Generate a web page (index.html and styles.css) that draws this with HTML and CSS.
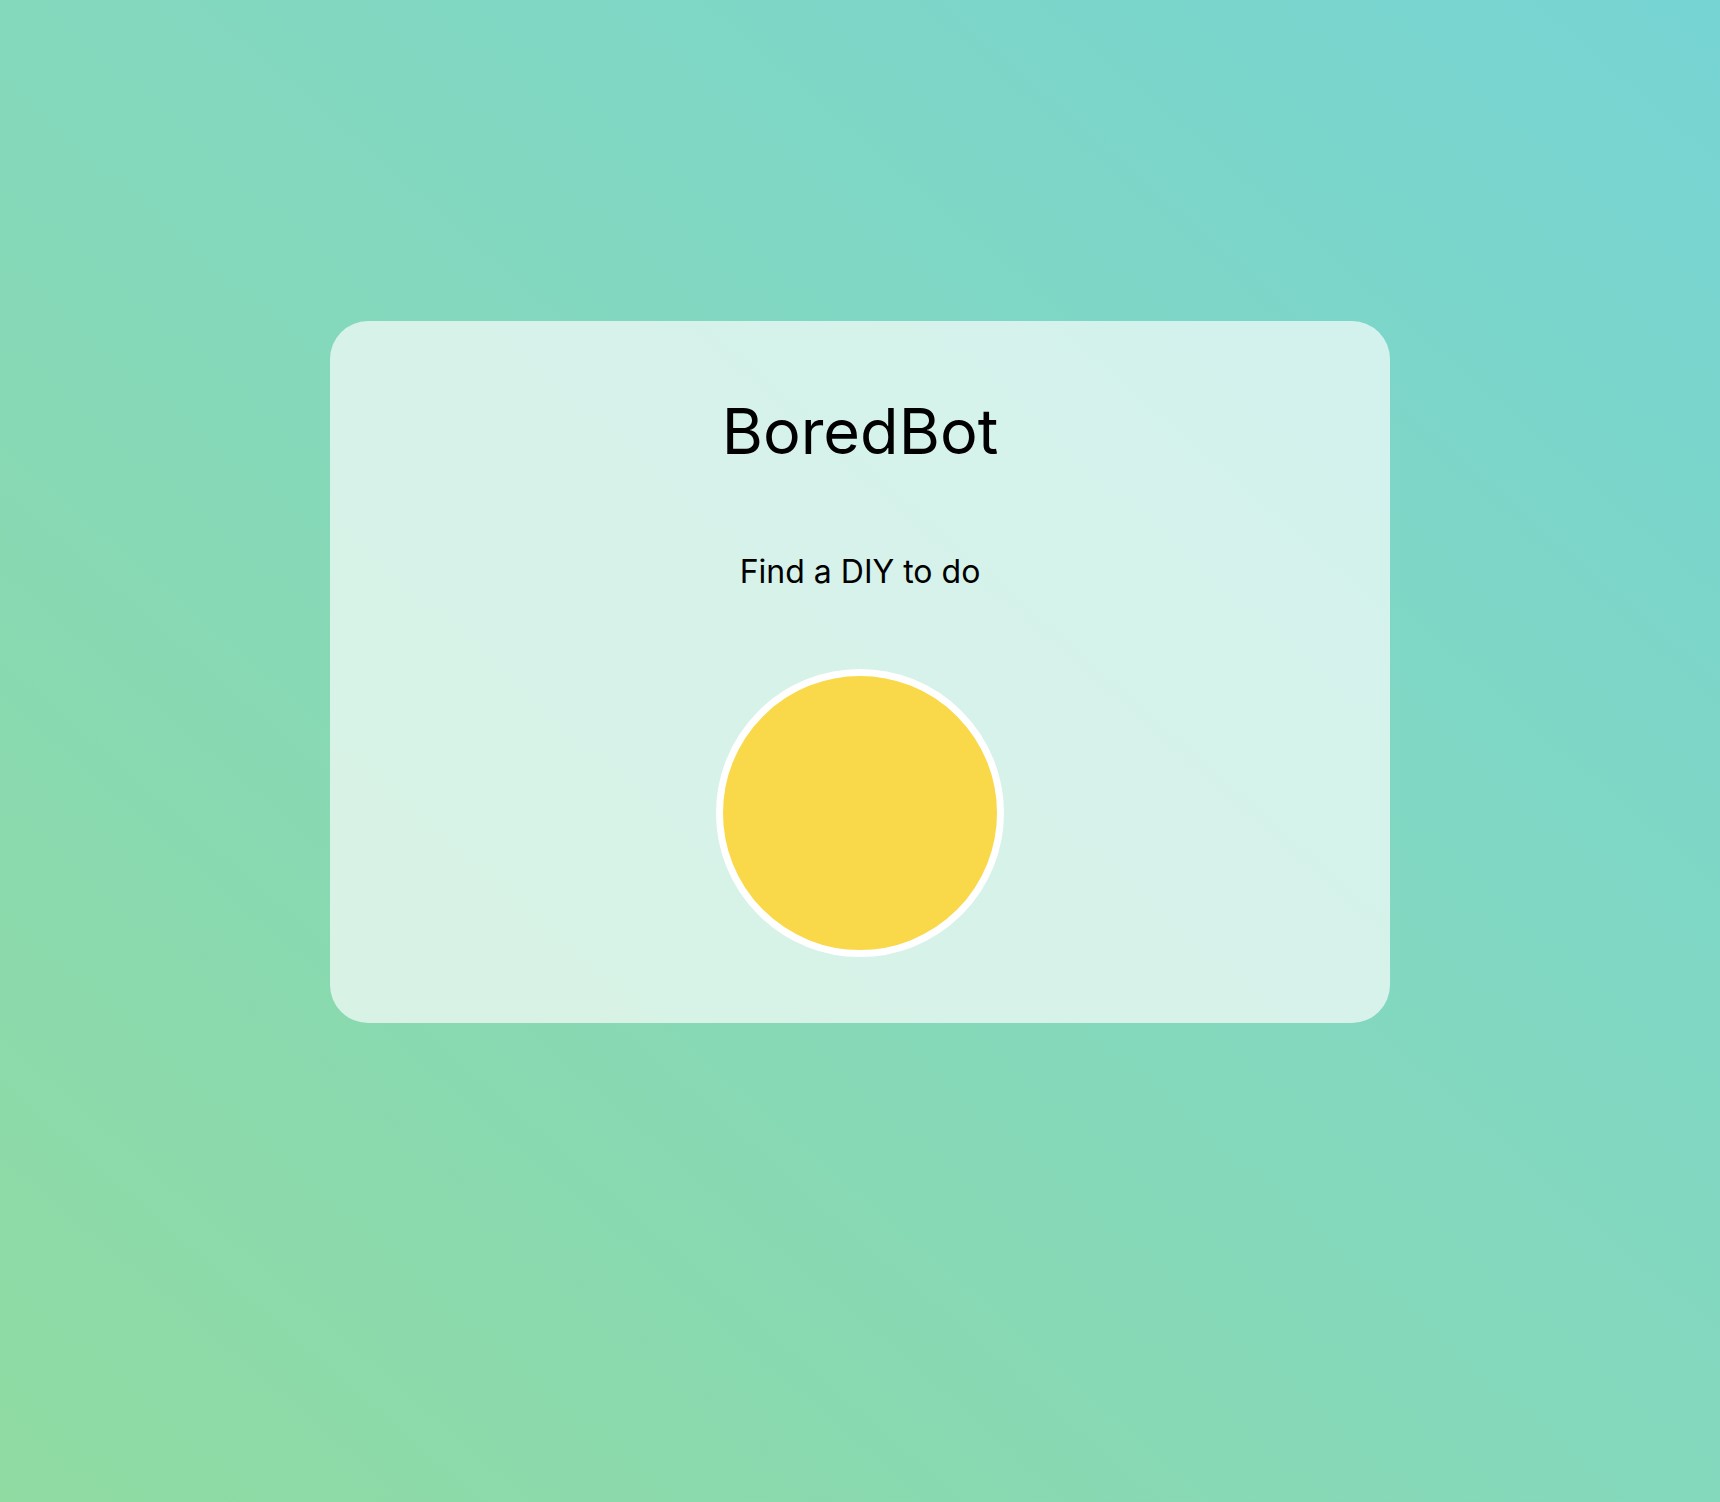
FILE: index.html
```html
<!DOCTYPE html>
<html lang="en">
<head>
<meta charset="utf-8">
<title>BoredBot</title>
<link rel="stylesheet" href="styles.css">
</head>
<body>
<main class="page">
  <section class="card">
    <h1 class="title">BoredBot</h1>
    <p class="subtitle">Find a DIY to do</p>
    <button class="orb" type="button" aria-label="Get activity"></button>
  </section>
</main>
</body>
</html>
```
FILE: styles.css
```css
html, body {
  margin: 0;
  padding: 0;
}
body {
  min-height: 1502px;
  background: linear-gradient(to top right, #90dba2 0%, #84d8bc 50%, #76d4d3 100%);
  font-family: Inter, "Noto Sans", sans-serif;
  color: #000;
}
.page {
  display: flex;
  justify-content: center;
  padding-top: 321px;
}
.card {
  width: 1060px;
  box-sizing: border-box;
  padding: 72px 0 66px;
  border-radius: 38px;
  background: rgba(255, 255, 255, 0.67);
  display: flex;
  flex-direction: column;
  align-items: center;
}
.title {
  margin: 0;
  font-size: 63px;
  font-weight: 400;
  line-height: 77px;
}
.subtitle {
  margin: 82px 0 0;
  font-size: 32px;
  font-weight: 400;
  line-height: 39px;
}
.orb {
  margin-top: 78px;
  width: 288px;
  height: 288px;
  border-radius: 50%;
  border: 7px solid #fff;
  background: #f9d84a;
  box-sizing: border-box;
  padding: 0;
  cursor: pointer;
}
```
